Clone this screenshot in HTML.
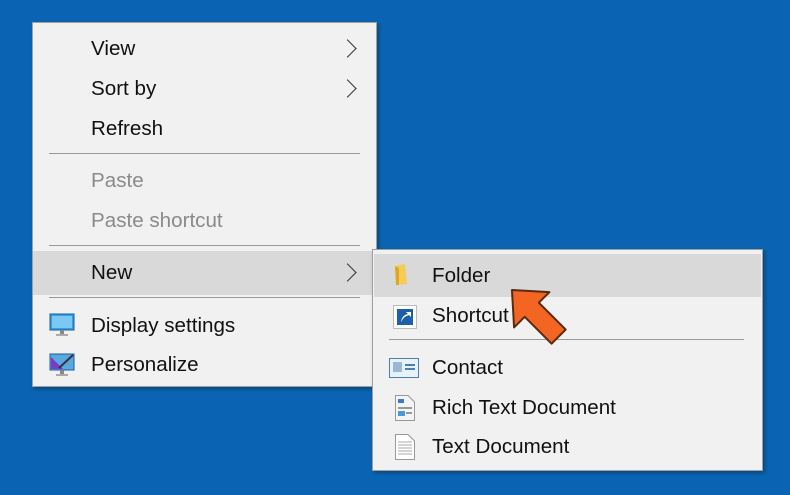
<html><head><style>
body{margin:0;width:790px;height:495px;background:#0b64b3;position:relative;overflow:hidden;font-family:"Liberation Sans",sans-serif;}
.m{position:absolute;background:#f1f1f1;border:1px solid #a0a0a0;box-shadow:2px 2px 4px rgba(0,0,0,.3)}
.i{position:absolute;font-size:20.6px;color:#111;line-height:24px}
.g{color:#8a8a8a}
.s{position:absolute;height:1px;background:#9a9a9a}
.h{position:absolute;background:#d9d9d9}
.ar{position:absolute;width:12px;height:12px;border-right:1.5px solid #333;border-top:1.5px solid #333;transform:rotate(45deg)}
</style></head><body>
<div class="m" style="left:32px;top:22px;width:343px;height:363px">
<div class="h" style="left:0;top:228px;width:343px;height:44px"></div>
<div class="i" style="left:58px;top:14px">View</div><div class="ar" style="left:308px;top:19px"></div>
<div class="i" style="left:58px;top:54px">Sort by</div><div class="ar" style="left:308px;top:59px"></div>
<div class="i" style="left:58px;top:94px">Refresh</div>
<div class="s" style="left:16px;top:130px;width:311px"></div>
<div class="i g" style="left:58px;top:146px">Paste</div>
<div class="i g" style="left:58px;top:186px">Paste shortcut</div>
<div class="s" style="left:16px;top:222px;width:311px"></div>
<div class="i" style="left:58px;top:238px">New</div><div class="ar" style="left:308px;top:243px"></div>
<div class="s" style="left:16px;top:274px;width:311px"></div>
<svg style="position:absolute;left:16px;top:290px" width="26" height="24"><rect x="1" y="1" width="24" height="16" fill="#3a9de0" stroke="#1a5a9a"/><rect x="3" y="3" width="20" height="12" fill="#7cc8f4"/><rect x="11" y="17" width="4" height="4" fill="#888"/><rect x="7" y="21" width="12" height="2" fill="#aaa"/></svg>
<div class="i" style="left:58px;top:291px">Display settings</div>
<svg style="position:absolute;left:16px;top:330px" width="26" height="24"><rect x="1" y="1" width="24" height="16" fill="#5aa8e0" stroke="#1a5a9a"/><polygon points="2,4 14,16 2,16" fill="#7a3cc8"/><line x1="10" y1="15" x2="24" y2="2" stroke="#333" stroke-width="2"/><rect x="11" y="17" width="4" height="4" fill="#888"/><rect x="7" y="21" width="12" height="2" fill="#aaa"/></svg>
<div class="i" style="left:58px;top:330px">Personalize</div>
</div>
<div class="m" style="left:372px;top:249px;width:389px;height:220px">
<div class="h" style="left:1px;top:4px;width:387px;height:43px"></div>
<svg style="position:absolute;left:20px;top:14px" width="16" height="22"><path d="M2 2 L12 0 L14 20 L3 21 Z" fill="#f5cc55"/><path d="M2 2 L6 4 L6 21 L3 21Z" fill="#e0a820"/></svg>
<div class="i" style="left:59px;top:14px">Folder</div>
<svg style="position:absolute;left:20px;top:55px" width="24" height="24"><rect x="0.5" y="0.5" width="23" height="23" fill="#fff" stroke="#bbb"/><rect x="4" y="4" width="16" height="16" fill="#1d5fa8"/><path d="M8 17 Q9 10 15 9 L13 7 L18 7 L18 12 L16 10 Q11 11 8 17Z" fill="#fff"/></svg>
<div class="i" style="left:59px;top:54px">Shortcut</div>
<div class="s" style="left:16px;top:89px;width:355px"></div>
<svg style="position:absolute;left:16px;top:108px" width="30" height="20"><rect x="0.5" y="0.5" width="29" height="19" fill="#e8f2fb" stroke="#4a7fb5"/><rect x="4" y="4" width="9" height="10" fill="#9cb8d8"/><rect x="16" y="6" width="10" height="2" fill="#4a7fb5"/><rect x="16" y="10" width="10" height="2" fill="#4a7fb5"/></svg>
<div class="i" style="left:59px;top:106px">Contact</div>
<svg style="position:absolute;left:22px;top:145px" width="20" height="26"><path d="M0.5 0.5 H13 L19.5 7 V25.5 H0.5Z" fill="#f4f4f4" stroke="#999"/><rect x="3" y="4" width="6" height="4" fill="#3a7cc8"/><rect x="3" y="12" width="14" height="2" fill="#999"/><rect x="3" y="16" width="7" height="5" fill="#4a9ad8"/><rect x="11" y="17" width="6" height="2" fill="#999"/></svg>
<div class="i" style="left:59px;top:146px">Rich Text Document</div>
<svg style="position:absolute;left:22px;top:184px" width="20" height="26"><path d="M0.5 0.5 H13 L19.5 7 V25.5 H0.5Z" fill="#fff" stroke="#999"/><g stroke="#aaa"><line x1="3" y1="8" x2="17" y2="8"/><line x1="3" y1="11" x2="17" y2="11"/><line x1="3" y1="14" x2="17" y2="14"/><line x1="3" y1="17" x2="17" y2="17"/><line x1="3" y1="20" x2="17" y2="20"/></g></svg>
<div class="i" style="left:59px;top:185px">Text Document</div>
</div>
<svg style="position:absolute;left:494px;top:272px" width="84" height="84"><g transform="rotate(-45 42 42)"><path d="M42 8 L67 36 L52 36 L52 74 L32 74 L32 36 L17 36 Z" fill="#f26522" stroke="#5a2a10" stroke-width="2" stroke-linejoin="round"/></g></svg>
</body></html>
